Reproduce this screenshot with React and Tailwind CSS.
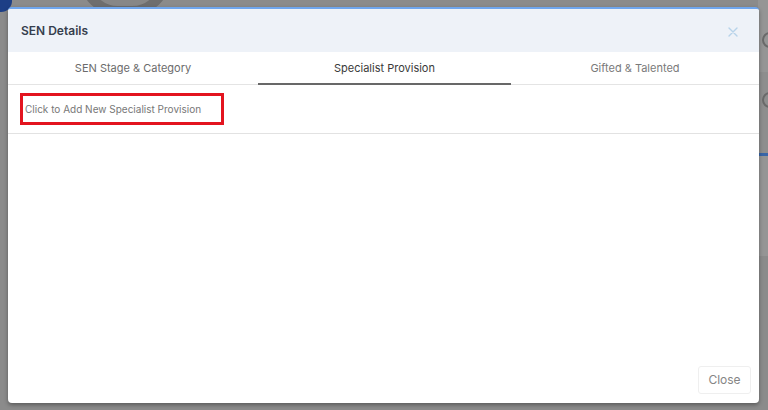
import React from "react";

export default function App() {
  return (
    <div
      className="relative w-[768px] h-[410px] overflow-hidden bg-[#8b8b8b]"
      style={{ fontFamily: "Inter, 'Noto Sans', sans-serif" }}
    >
      {/* faded background page behind the overlay */}
      <div className="absolute left-[-10px] top-[-14px] w-[22px] h-[26px] rounded-full bg-[#1d3f86]" />
      <div className="absolute left-[80px] top-[-60px] w-[90px] h-[76px] rounded-full border-[10px] border-[#6e6e6e] bg-[#878787]" />
      <div className="absolute right-0 top-0 w-[10px] h-[72px] bg-[#959595]" />
      <div className="absolute right-[-10px] top-[32px] w-[16px] h-[16px] rounded-full border-[2px] border-[#6a6a6a]" />
      <div className="absolute right-0 top-[72px] w-[10px] h-[82px] bg-[#8e8e8e]" />
      <div className="absolute right-[-10px] top-[92px] w-[16px] h-[16px] rounded-full border-[2px] border-[#6a6a6a]" />
      <div className="absolute right-0 top-[153px] w-[10px] h-[3px] bg-[#3a66a8]" />
      <div className="absolute right-0 top-[156px] w-[10px] h-[100px] bg-[#959595]" />

      <div className="relative pl-[8px] pt-[7px]">
        <div className="w-[751px] h-[396px] bg-white rounded-[4px] border-t-2 border-[#6fa6ee] shadow-[0_2px_4px_rgba(0,0,0,0.35)] flex flex-col overflow-hidden">
          {/* header */}
          <div className="h-[43px] bg-[#eef2f8] flex items-center justify-between pl-[13px] pr-[21px]">
            <span className="text-[12px] font-semibold text-[#363e4e]">SEN Details</span>
            <svg width="10" height="10" viewBox="0 0 10 10" className="mt-[2px]">
              <path d="M1 1 L9 9 M9 1 L1 9" stroke="#b7d3ea" strokeWidth="1.4" strokeLinecap="round" />
            </svg>
          </div>

          {/* tabs */}
          <div className="h-[33px] flex border-b border-[#e4e4e4]">
            <div className="w-[250px] flex items-center justify-center text-[11px] text-[#6b6b6b]">
              SEN Stage &amp; Category
            </div>
            <div className="w-[253px] flex items-center justify-center text-[11px] text-[#3a3a3a] border-b-2 border-[#686868] mb-[-1px] pt-[1px]">
              Specialist Provision
            </div>
            <div className="flex-1 flex items-center justify-center text-[11px] text-[#7a7a7a]">
              Gifted &amp; Talented
            </div>
          </div>

          {/* content row */}
          <div className="h-[49px] border-b border-[#e2e2e2] flex items-center pl-[12px]">
            <div className="w-[204px] h-[32px] border-[3px] border-[#e3141f] flex items-center pl-[2px] text-[10px] text-[#777777]">
              Click to Add New Specialist Provision
            </div>
          </div>

          <div className="flex-1" />

          {/* footer */}
          <div className="flex justify-end pr-[8px] pb-[9px]">
            <button className="h-[28px] w-[53px] border border-[#efefef] rounded-[3px] bg-white text-[12px] text-[#858585]">
              Close
            </button>
          </div>
        </div>
      </div>
    </div>
  );
}
